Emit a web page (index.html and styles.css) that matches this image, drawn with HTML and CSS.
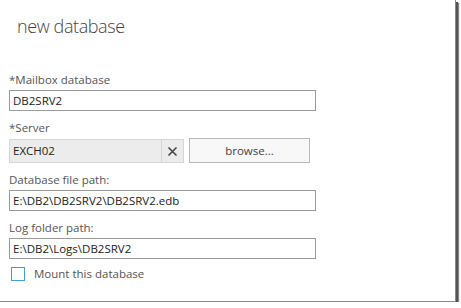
FILE: index.html
```html
<!DOCTYPE html>
<html lang="en">
<head>
    <meta charset="UTF-8">
    <title>new database</title>
    <link rel="stylesheet" href="styles.css">
</head>
<body>
    <div class="dialog">
        <h1 class="title">new database</h1>

        <div class="field">
            <label>*Mailbox database</label>
            <div class="box wide">DB2SRV2</div>
        </div>

        <div class="field">
            <label>*Server</label>
            <div class="server-row">
                <div class="picker">
                    <span class="picker-value">EXCH02</span>
                    <span class="clear">
                        <svg width="11" height="11" viewBox="0 0 11 11"><path d="M1.5 1.5 L9.5 9.5 M9.5 1.5 L1.5 9.5" stroke="#444" stroke-width="1.6" fill="none"/></svg>
                    </span>
                </div>
                <div class="browse">browse...</div>
            </div>
        </div>

        <div class="field">
            <label>Database file path:</label>
            <div class="box wide">E:\DB2\DB2SRV2\DB2SRV2.edb</div>
        </div>

        <div class="field">
            <label>Log folder path:</label>
            <div class="box wide">E:\DB2\Logs\DB2SRV2</div>
        </div>

        <div class="check-row">
            <span class="check"></span>
            <span>Mount this database</span>
        </div>
    </div>
</body>
</html>
```

FILE: styles.css
```css
body {
    margin: 0;
    background: #ffffff;
    font-family: 'Open Sans', 'Noto Sans', sans-serif;
}

.dialog {
    width: 456px;
    height: 302px;
    box-sizing: border-box;
    padding: 0 0 0 9px;
    background: #fff;
    border-right: 1px solid #8a8a8a;
    border-bottom: 1px solid #8a8a8a;
    box-shadow: 2px 2px 0 #555, 3px 3px 1px #888;
}

.title {
    margin: 0;
    padding: 14px 0 0 8px;
    height: 63px;
    box-sizing: border-box;
    font-size: 18px;
    line-height: 24px;
    font-weight: 300;
    color: #444;
    letter-spacing: -0.4px;
}

.field {
    margin-top: 10px;
}

.field label {
    display: block;
    font-size: 11.5px;
    color: #555;
    height: 14px;
    line-height: 14px;
    margin-bottom: 3px;
}

.box {
    height: 21px;
    box-sizing: border-box;
    border: 1px solid #9a9a9a;
    font-size: 11.5px;
    color: #222;
    line-height: 19px;
    padding-left: 3px;
}

.wide {
    width: 307px;
}

.server-row {
    display: flex;
    gap: 5px;
    height: 25px;
}

.picker {
    width: 175px;
    display: flex;
    background: #ececec;
    border: 1px solid #d6d6d6;
    box-sizing: border-box;
    margin-top: 1px;
}

.picker-value {
    flex: 1;
    font-size: 11.5px;
    color: #222;
    line-height: 22px;
    padding-left: 3px;
}

.clear {
    width: 21px;
    border-left: 1px solid #d6d6d6;
    display: flex;
    align-items: center;
    justify-content: center;
}

.browse {
    width: 121px;
    box-sizing: border-box;
    border: 1px solid #b8b8b8;
    background: #f8f8f8;
    font-size: 11.5px;
    color: #444;
    text-align: center;
    line-height: 23px;
}

.check-row {
    display: flex;
    align-items: center;
    gap: 9px;
    margin-top: 7px;
    padding-left: 2px;
    font-size: 11.5px;
    color: #555;
}

.check {
    width: 12px;
    height: 12px;
    border: 1px solid #3e9ede;
    background: #fff;
}
```
